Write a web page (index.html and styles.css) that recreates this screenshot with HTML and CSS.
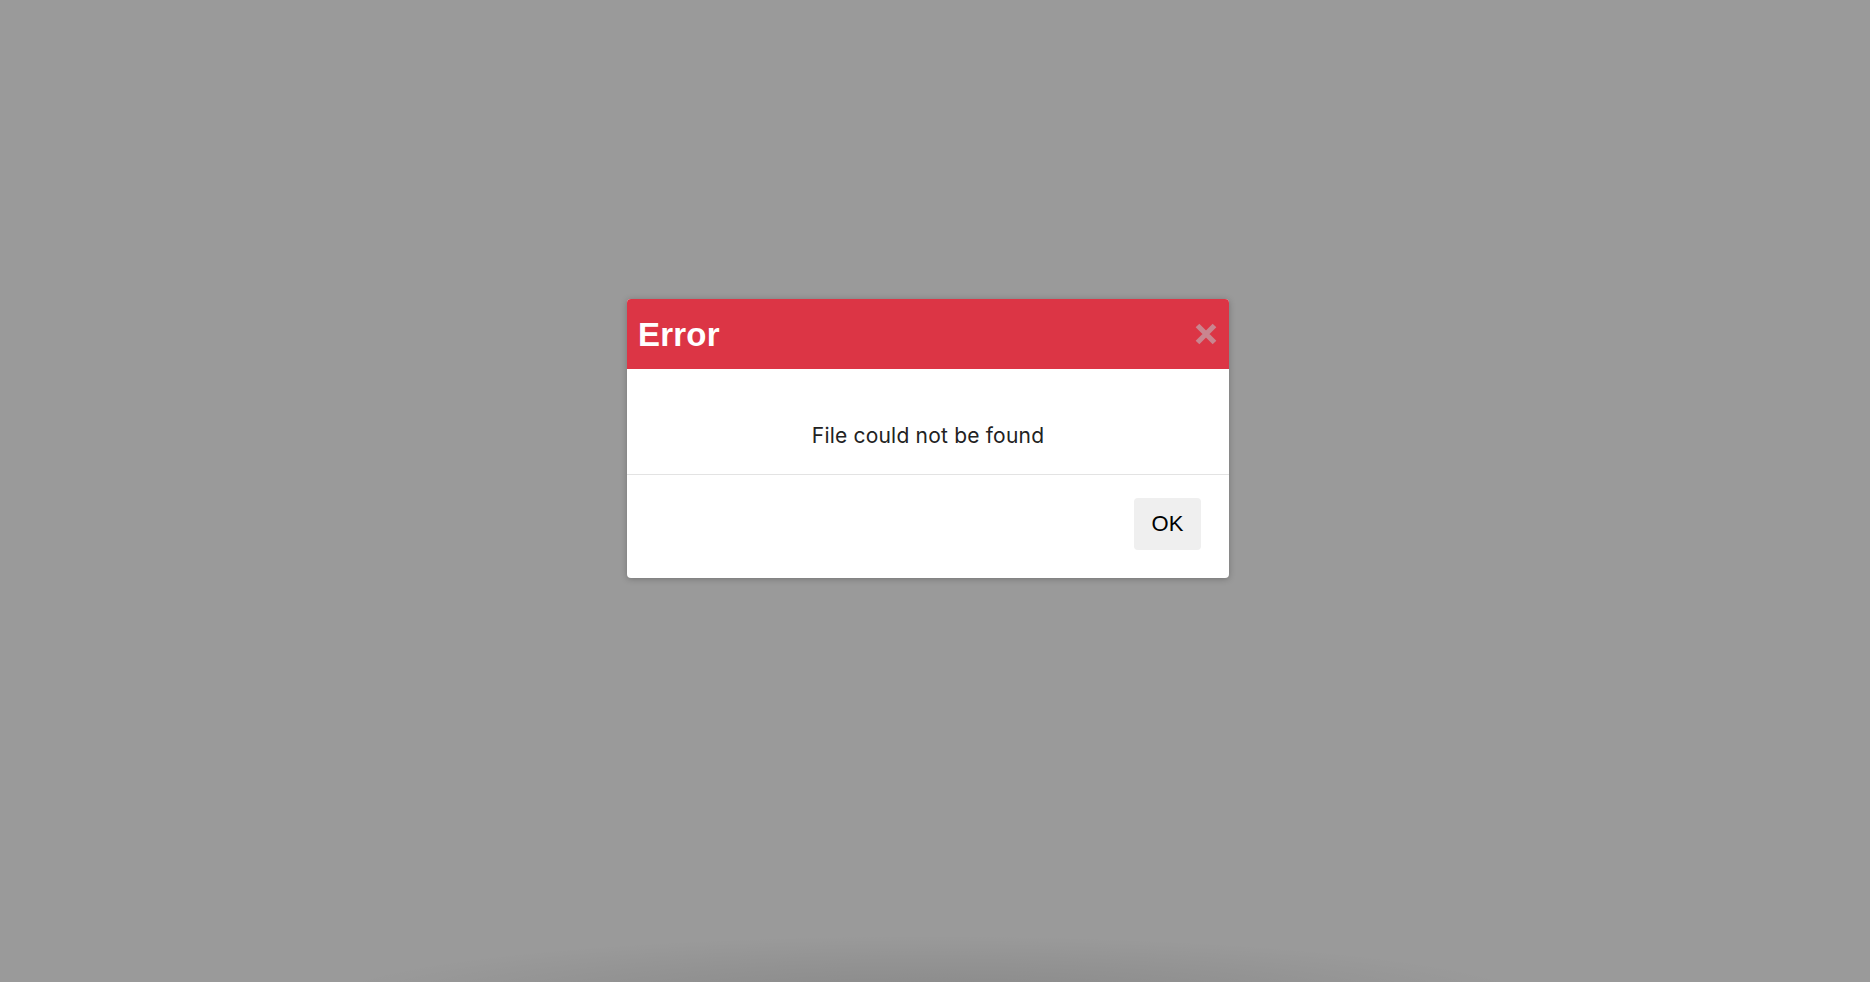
FILE: index.html
```html
<!DOCTYPE html>
<html lang="en">
<head>
<meta charset="utf-8">
<title>Error</title>
<link rel="stylesheet" href="styles.css">
</head>
<body>
<div class="backdrop">
  <div class="dialog">
    <div class="dialog-header">
      <h1 class="dialog-title">Error</h1>
      <button class="close" aria-label="Close">
        <svg viewBox="0 0 24 24" width="24" height="24"><path d="M3.5 3.5 L20.5 20.5 M20.5 3.5 L3.5 20.5" stroke="#c9858f" stroke-width="5.2" stroke-linecap="butt"/></svg>
      </button>
    </div>
    <div class="dialog-body">
      <p class="message">File could not be found</p>
    </div>
    <div class="dialog-footer">
      <button class="btn-ok">OK</button>
    </div>
  </div>
</div>
</body>
</html>
```

FILE: styles.css
```css
html, body {
  margin: 0;
  padding: 0;
  height: 100%;
}
body {
  background: #9a9a9a;
  font-family: Inter, "Liberation Sans", Arial, sans-serif;
  overflow: hidden;
}
.backdrop {
  width: 1870px;
  height: 982px;
  display: flex;
  align-items: flex-start;
  background:
    radial-gradient(ellipse 620px 70px at 930px 1005px, rgba(0,0,0,0.12), rgba(0,0,0,0.05) 60%, rgba(0,0,0,0) 100%),
    #9a9a9a;
}
.dialog {
  margin: 299px 0 0 627px;
  width: 602px;
  background: #fff;
  border-radius: 4px;
  overflow: hidden;
  box-shadow: 0 1px 6px rgba(0,0,0,0.25);
}
.dialog-header {
  height: 70px;
  background: #dc3545;
  display: flex;
  align-items: center;
  justify-content: space-between;
  padding: 0 11px 0 11px;
}
.dialog-title {
  margin: 0;
  color: #fff;
  font-family: "Liberation Sans", Arial, sans-serif;
  font-weight: 700;
  font-size: 33px;
  line-height: 1;
  letter-spacing: 0.2px;
}
.close {
  border: 0;
  padding: 0;
  margin: 0;
  background: transparent;
  width: 24px;
  height: 24px;
  display: flex;
}
.dialog-body {
  height: 106px;
  border-bottom: 1px solid #e3e3e3;
  display: flex;
  justify-content: center;
  padding-top: 53px;
  box-sizing: border-box;
}
.message {
  margin: 0;
  font-size: 21px;
  line-height: 28px;
  color: #222;
  letter-spacing: 0.2px;
}
.dialog-footer {
  display: flex;
  justify-content: flex-end;
  padding: 23px 28px 28px;
}
.btn-ok {
  width: 67px;
  height: 52px;
  border: 0;
  border-radius: 4px;
  background: #efefef;
  font-family: "Liberation Sans", Arial, sans-serif;
  font-size: 22px;
  color: #000;
  padding: 0;
}
```
